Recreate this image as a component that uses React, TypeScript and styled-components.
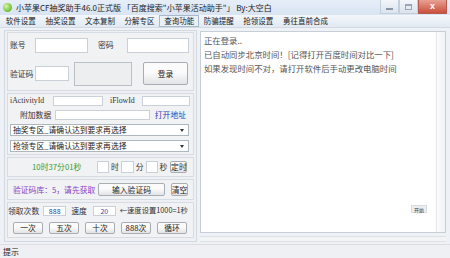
import styled, { createGlobalStyle } from "styled-components";

const GlobalStyle = createGlobalStyle`
  html, body {
    margin: 0;
    padding: 0;
    background: #f0f0f0;
  }
  * {
    box-sizing: border-box;
  }
`;

const Window = styled.div`
  width: 450px;
  height: 258px;
  display: flex;
  flex-direction: column;
  background: #eef1f5;
  font-family: "Noto Sans CJK SC", "Liberation Sans", sans-serif;
  font-size: 7.8px;
  line-height: 1;
  color: #333;
  overflow: hidden;
`;

const TitleBar = styled.div`
  height: 15px;
  display: flex;
  align-items: center;
  padding-left: 3px;
  background: linear-gradient(#e6eef8, #d9e4f2);
`;

const AppIcon = styled.div`
  width: 9px;
  height: 9px;
  border-radius: 50%;
  background: radial-gradient(circle at 35% 35%, #d8f5a8, #6cbf2e 70%);
  margin-right: 4px;
  flex-shrink: 0;
`;

const TitleText = styled.div`
  flex: 1;
  font-size: 8px;
  color: #222;
  white-space: nowrap;
`;

const WinButtons = styled.div`
  display: flex;
  align-self: flex-start;
  margin-right: 3px;
`;

const WinButton = styled.div<{ $close?: boolean }>`
  width: ${(p) => (p.$close ? "29px" : "19px")};
  height: 14px;
  display: flex;
  align-items: center;
  justify-content: center;
  color: #fff;
  font-size: 9px;
  font-family: "Liberation Sans", sans-serif;
  font-weight: bold;
  border: 1px solid ${(p) => (p.$close ? "#b85a4e" : "#c4cfdc")};
  border-top: none;
  background: ${(p) =>
    p.$close
      ? "linear-gradient(#e8a093, #c9503c)"
      : "linear-gradient(#f3f6fa, #dbe3ed)"};
`;

const MinGlyph = styled.div`
  width: 7px;
  height: 2px;
  background: #8a96a6;
  margin-top: 4px;
`;

const MaxGlyph = styled.div`
  width: 7px;
  height: 6px;
  border: 1px solid #9aa6b6;
  border-top-width: 2px;
`;

const MenuBar = styled.div`
  height: 13px;
  display: flex;
  align-items: center;
  padding-left: 1px;
  background: linear-gradient(#f4f7fb, #e2e9f2);
  border-bottom: 1px solid #d2dae4;
`;

const MenuItem = styled.div<{ $active?: boolean }>`
  height: 12px;
  padding: 0 3.8px;
  display: flex;
  align-items: center;
  font-size: 7.5px;
  color: #222;
  border: 1px solid ${(p) => (p.$active ? "#a9b8cb" : "transparent")};
  background: ${(p) => (p.$active ? "#eaf0f7" : "transparent")};
  white-space: nowrap;
  flex-shrink: 0;
`;

const Body = styled.div`
  flex: 1;
  display: flex;
  gap: 3px;
  padding: 2px 4px 2px 4px;
`;

const LeftPanel = styled.div`
  width: 193px;
  display: flex;
  flex-direction: column;
  gap: 2px;
  padding: 1px 2px 3px 2px;
  border: 1px solid #d3d9e0;
  background: #eef0f3;
`;

const Group = styled.div<{ $h: number; $gap?: number }>`
  height: ${(p) => p.$h}px;
  border: 1px solid #d6dce3;
  background: #f1f2f4;
  display: flex;
  flex-direction: column;
  justify-content: center;
  gap: ${(p) => p.$gap ?? 4}px;
  padding: 0 2px;
`;

const Row = styled.div<{ $gap?: number }>`
  display: flex;
  align-items: center;
  gap: ${(p) => p.$gap ?? 0}px;
`;

const Label = styled.span<{ $w?: number; $color?: string; $mono?: boolean }>`
  width: ${(p) => (p.$w ? `${p.$w}px` : "auto")};
  color: ${(p) => p.$color || "#333"};
  font-family: ${(p) =>
    p.$mono ? '"Liberation Serif", serif' : "inherit"};
  white-space: nowrap;
  flex-shrink: 0;
`;

const Input = styled.div<{ $w: number; $h?: number }>`
  width: ${(p) => p.$w}px;
  height: ${(p) => p.$h || 12}px;
  background: #fff;
  border: 1px solid #c9d0d8;
  font-size: 7px;
  color: #2a3fa0;
  display: flex;
  align-items: center;
  justify-content: center;
  flex-shrink: 0;
`;

const Captcha = styled.div`
  width: 58px;
  height: 24px;
  border: 1px solid #b9c0c8;
  background: #eceef0;
  margin-left: 5px;
`;

const Button = styled.div<{ $w: number; $h?: number }>`
  width: ${(p) => p.$w}px;
  height: ${(p) => p.$h || 12}px;
  display: flex;
  align-items: center;
  justify-content: center;
  border: 1px solid #a8adb4;
  border-radius: 2px;
  background: linear-gradient(#fbfbfb 45%, #e2e3e5);
  color: #222;
  font-size: 7.8px;
  white-space: nowrap;
  flex-shrink: 0;
`;

const Link = styled.span`
  color: #2b3fb5;
  margin-left: auto;
  padding-right: 5px;
  white-space: nowrap;
`;

const Select = styled.div`
  height: 12px;
  margin-right: 2px;
  display: flex;
  align-items: center;
  justify-content: space-between;
  padding: 0 4px 0 2px;
  background: #fff;
  border: 1px solid #aeb6c0;
  color: #222;
  white-space: nowrap;
`;

const Caret = styled.span`
  width: 0;
  height: 0;
  border-left: 2.5px solid transparent;
  border-right: 2.5px solid transparent;
  border-top: 3px solid #333;
`;

const LogPanel = styled.div`
  flex: 1;
  display: flex;
  flex-direction: column;
  margin-top: 1px;
`;

const LogBox = styled.div`
  height: 202px;
  position: relative;
  background: #fff;
  border: 1px solid #c8ced6;
  padding: 1px 3px;
  font-size: 8.4px;
  color: #555;
  line-height: 14px;
`;

const ScrollTrack = styled.div`
  position: absolute;
  top: 0;
  right: 0;
  bottom: 0;
  width: 9px;
  border-left: 1px solid #e4e8ec;
  background: linear-gradient(90deg, #fafbfc, #f0f2f4);
`;

const StartBadge = styled.div`
  position: absolute;
  right: 18px;
  bottom: 19px;
  width: 16px;
  height: 8px;
  background: #eceeef;
  border: 1px solid #d8dbde;
  font-size: 5px;
  line-height: 1;
  color: #444;
  display: flex;
  align-items: center;
  justify-content: center;
`;

const LogFooter = styled.div`
  flex: 1;
  margin-top: 3px;
  border-top: 1px solid #dde1e6;
  border-bottom: 1px solid #dde1e6;
  background: #f3f4f6;
`;

const StatusBar = styled.div`
  height: 14px;
  display: flex;
  align-items: center;
  padding-left: 3px;
  background: #eef0f3;
  border-top: 1px solid #d9dde2;
  font-size: 8px;
  color: #222;
`;

const menus = [
  "软件设置",
  "抽奖设置",
  "文本复制",
  "分解专区",
  "查询功能",
  "防骗提醒",
  "抢领设置",
  "勇往直前合成",
];

const logLines = [
  "正在登录..",
  "已自动同步北京时间！[记得打开百度时间对比一下]",
  "如果发现时间不对，请打开软件后手动更改电脑时间",
];

const runButtons = ["一次", "五次", "十次", "888次", "循环"];

export default function App() {
  return (
    <>
      <GlobalStyle />
      <Window>
        <TitleBar>
          <AppIcon />
          <TitleText>
            小苹果CF抽奖助手46.0正式版 「百度搜索"小苹果活动助手"」 By:大空白
          </TitleText>
          <WinButtons>
            <WinButton>
              <MinGlyph />
            </WinButton>
            <WinButton>
              <MaxGlyph />
            </WinButton>
            <WinButton $close>x</WinButton>
          </WinButtons>
        </TitleBar>

        <MenuBar>
          {menus.map((m) => (
            <MenuItem key={m} $active={m === "查询功能"}>
              {m}
            </MenuItem>
          ))}
        </MenuBar>

        <Body>
          <LeftPanel>
            <Group $h={59} $gap={9}>
              <Row>
                <Label $w={25}>账号</Label>
                <Input $w={53} $h={15} />
                <Label $w={39} style={{ paddingLeft: 10 }}>
                  密码
                </Label>
                <Input $w={62} $h={15} />
              </Row>
              <Row>
                <Label $w={25}>验证码</Label>
                <Input $w={34} $h={15} />
                <Captcha />
                <Button $w={45} $h={23} style={{ marginLeft: 11 }}>
                  登录
                </Button>
              </Row>
            </Group>

            <Group $h={62}>
              <Row>
                <Label $w={43} $mono>
                  iActivityId
                </Label>
                <Input $w={50} $h={10} />
                <Label $w={39} $mono style={{ paddingLeft: 7 }}>
                  iFlowId
                </Label>
                <Input $w={48} $h={10} />
              </Row>
              <Row>
                <Label $w={45} style={{ paddingLeft: 10 }}>
                  附加数据
                </Label>
                <Input $w={95} $h={10} />
                <Link>打开地址</Link>
              </Row>
              <Select>
                抽奖专区_请确认达到要求再选择
                <Caret />
              </Select>
              <Select>
                抢领专区_请确认达到要求再选择
                <Caret />
              </Select>
            </Group>

            <Group $h={20}>
              <Row $gap={2}>
                <Label $w={85} $color="#3c9a2a" style={{ paddingLeft: 22 }}>
                  10时37分01秒
                </Label>
                <Input $w={12} />
                <Label>时</Label>
                <Input $w={13} />
                <Label>分</Label>
                <Input $w={12} />
                <Label>秒</Label>
                <Button $w={17} style={{ marginLeft: 1 }}>
                  定时
                </Button>
              </Row>
            </Group>

            <Group $h={21}>
              <Row>
                <Label $w={88} $color="#8a3fc4" style={{ paddingLeft: 3 }}>
                  验证码库：5，请先获取
                </Label>
                <Button $w={67} $h={13}>
                  输入验证码
                </Button>
                <Button $w={17} $h={13} style={{ marginLeft: 6 }}>
                  清空
                </Button>
              </Row>
            </Group>

            <Group $h={36} $gap={6}>
              <Row $gap={4}>
                <Label style={{ marginLeft: -2 }}>领取次数</Label>
                <Input $w={23} $h={10}>
                  888
                </Input>
                <Label style={{ paddingLeft: 1 }}>速度</Label>
                <Input $w={23} $h={10} style={{ marginLeft: 2 }}>
                  20
                </Input>
                <Label style={{ fontSize: 7.3 }}>←速度设置1000=1秒</Label>
              </Row>
              <Row $gap={6} style={{ paddingLeft: 3 }}>
                {runButtons.map((b) => (
                  <Button key={b} $w={30}>
                    {b}
                  </Button>
                ))}
              </Row>
            </Group>
          </LeftPanel>

          <LogPanel>
            <LogBox>
              {logLines.map((l) => (
                <div key={l}>{l}</div>
              ))}
              <StartBadge>开始</StartBadge>
              <ScrollTrack />
            </LogBox>
            <LogFooter />
          </LogPanel>
        </Body>

        <StatusBar>提示</StatusBar>
      </Window>
    </>
  );
}
